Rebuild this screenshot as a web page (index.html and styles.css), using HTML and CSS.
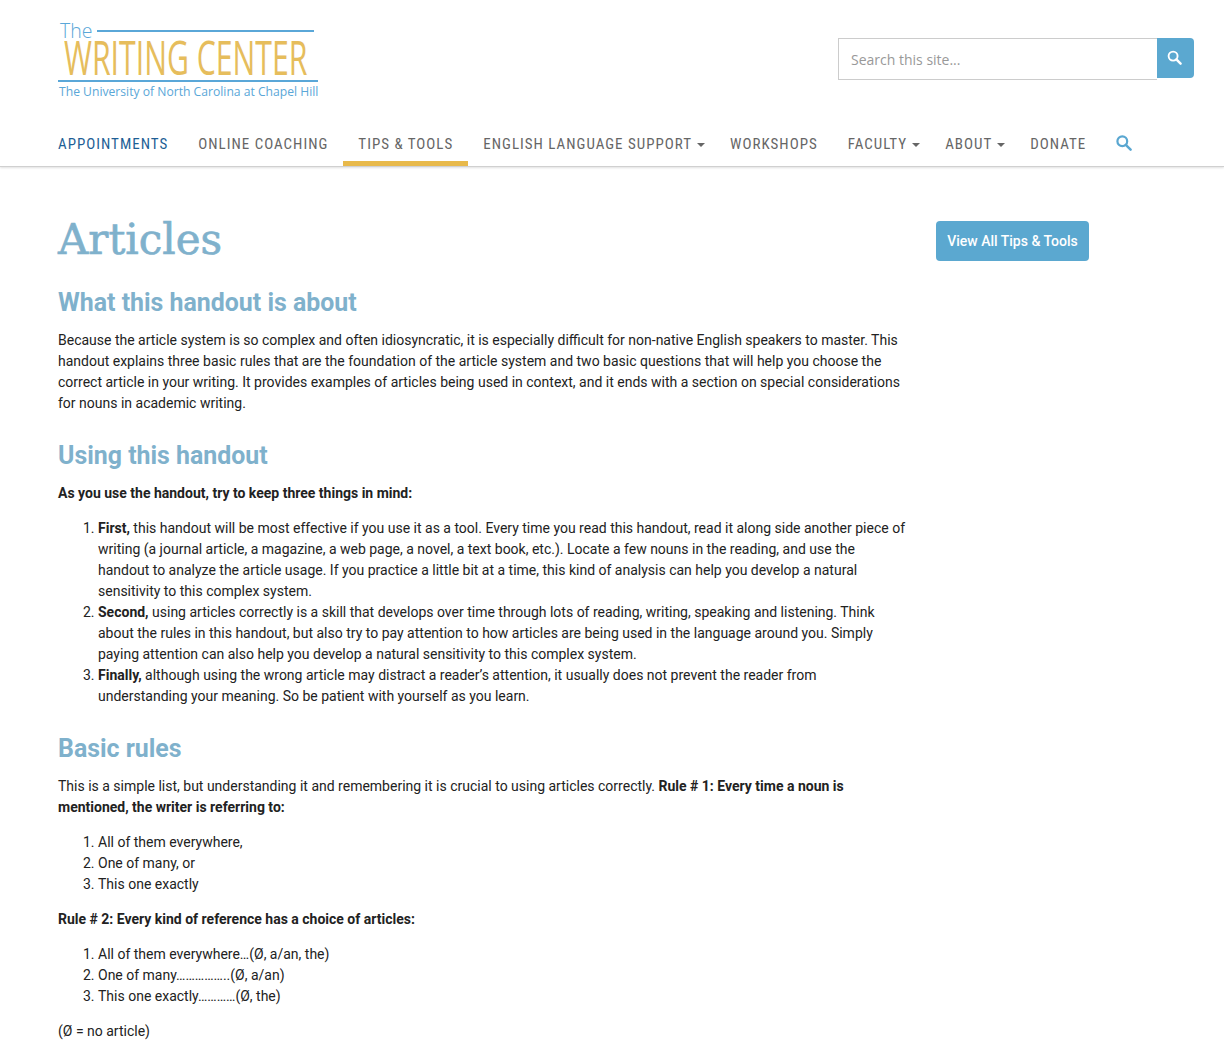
FILE: index.html
```html
<!DOCTYPE html>
<html lang="en">
<head>
<meta charset="utf-8">
<title>Articles – The Writing Center</title>
<link rel="stylesheet" href="styles.css">
</head>
<body>
<header class="site-header">
  <div class="top">
    <a class="logo" href="#">
      <div class="logo-the"><span>The</span><i></i></div>
      <div class="logo-name"><span>WRITING CENTER</span></div>
      <div class="logo-sub">The University of North Carolina at Chapel Hill</div>
    </a>
    <form class="search">
      <input class="search-input" type="text" placeholder="Search this site...">
      <button class="search-btn" type="button" aria-label="Search">
        <svg width="15" height="15" viewBox="0 0 16 16"><circle cx="6.5" cy="6.5" r="4.8" fill="none" stroke="#fff" stroke-width="2"/><path d="M10 10l4.5 4.5" stroke="#fff" stroke-width="2.6" stroke-linecap="round"/></svg>
      </button>
    </form>
  </div>
  <nav class="nav">
    <a class="nav-item first" href="#">Appointments</a>
    <a class="nav-item" href="#">Online Coaching</a>
    <a class="nav-item active" href="#">Tips &amp; Tools</a>
    <a class="nav-item drop" href="#">English Language Support<b class="caret"></b></a>
    <a class="nav-item" href="#">Workshops</a>
    <a class="nav-item drop" href="#">Faculty<b class="caret"></b></a>
    <a class="nav-item drop" href="#">About<b class="caret"></b></a>
    <a class="nav-item" href="#">Donate</a>
    <a class="nav-item nav-search" href="#" aria-label="Search">
      <svg width="16" height="16" viewBox="0 0 16 16"><circle cx="6.3" cy="6.3" r="4.9" fill="none" stroke="#5aa7d1" stroke-width="2.2"/><path d="M9.8 9.8l4.8 4.8" stroke="#5aa7d1" stroke-width="2.5" stroke-linecap="round"/></svg>
    </a>
  </nav>
</header>
<div class="page">
  <main class="content">
    <h1>Articles</h1>
    <h2 class="first-h2">What this handout is about</h2>
    <p>Because the article system is so complex and often idiosyncratic, it is especially difficult for non-native English speakers to master. This handout explains three basic rules that are the foundation of the article system and two basic questions that will help you choose the correct article in your writing. It provides examples of articles being used in context, and it ends with a section on special considerations for nouns in academic writing.</p>
    <h2>Using this handout</h2>
    <p><strong>As you use the handout, try to keep three things in mind:</strong></p>
    <ol>
      <li><strong>First,</strong> this handout will be most effective if you use it as a tool. Every time you read this handout, read it along side another piece of writing (a journal article, a magazine, a web page, a novel, a text book, etc.). Locate a few nouns in the reading, and use the handout to analyze the article usage. If you practice a little bit at a time, this kind of analysis can help you develop a natural sensitivity to this complex system.</li>
      <li><strong>Second,</strong> using articles correctly is a skill that develops over time through lots of reading, writing, speaking and listening. Think about the rules in this handout, but also try to pay attention to how articles are being used in the language around you. Simply paying attention can also help you develop a natural sensitivity to this complex system.</li>
      <li><strong>Finally,</strong> although using the wrong article may distract a reader’s attention, it usually does not prevent the reader from understanding your meaning. So be patient with yourself as you learn.</li>
    </ol>
    <h2>Basic rules</h2>
    <p>This is a simple list, but understanding it and remembering it is crucial to using articles correctly. <strong>Rule # 1: Every time a noun is mentioned, the writer is referring to:</strong></p>
    <ol>
      <li>All of them everywhere,</li>
      <li>One of many, or</li>
      <li>This one exactly</li>
    </ol>
    <p><strong>Rule # 2: Every kind of reference has a choice of articles:</strong></p>
    <ol>
      <li>All of them everywhere…(Ø, a/an, the)</li>
      <li>One of many……………..(Ø, a/an)</li>
      <li>This one exactly…………(Ø, the)</li>
    </ol>
    <p>(Ø = no article)</p>
  </main>
  <aside class="side">
    <a class="side-btn" href="#">View All Tips &amp; Tools</a>
  </aside>
</div>
</body>
</html>
```
FILE: styles.css
```css
* { box-sizing: border-box; }
html, body { margin: 0; padding: 0; }
body {
  background: #fff;
  color: #222;
  font-family: Roboto, "Liberation Sans", sans-serif;
  font-size: 14px;
  line-height: 21px;
  height: 1054px;
  overflow: hidden;
}
a { text-decoration: none; color: inherit; }

.site-header {
  height: 167px;
  border-bottom: 1px solid #d0d0d0;
  box-shadow: 0 1px 2px rgba(0,0,0,.12);
}
.top {
  height: 126px;
  padding: 20px 30px 0 58px;
  display: flex;
  justify-content: space-between;
  align-items: flex-start;
}
.logo { display: block; width: 262px; }
.logo-the {
  display: flex;
  align-items: center;
  gap: 5px;
  height: 21px;
  padding-left: 2px;
  padding-right: 6px;
  color: #5aa7d8;
  font-family: "Open Sans", sans-serif;
  font-weight: 300;
  font-size: 19.5px;
  line-height: 21px;
}
.logo-the i { flex: 1; height: 2px; background: #5aa7d8; margin-top: 1px; }
.logo-name {
  height: 39px;
  color: #e6bd5c;
  font-family: "Open Sans", sans-serif;
  font-weight: 500;
  font-size: 48px;
  line-height: 32px;
  white-space: nowrap;
  padding-left: 6px;
}
.logo-name span { display: inline-block; transform: scaleX(.63); transform-origin: 0 50%; }
.logo-sub {
  border-top: 2px solid #5aa7d8;
  width: 260px;
  padding-top: 2px;
  padding-left: 1px;
  color: #5aa7d8;
  font-family: "Open Sans", sans-serif;
  font-size: 12.15px;
  line-height: 16px;
  white-space: nowrap;
}

.search { display: flex; margin-top: 18px; }
.search-input {
  width: 319px;
  height: 42px;
  border: 1px solid #ccc;
  border-right: 0;
  padding: 0 12px;
  font-family: "Open Sans", sans-serif;
  font-size: 14px;
  color: #555;
  outline: 0;
  background: #fff;
}
.search-input::placeholder { color: #999; opacity: 1; }
.search-btn {
  width: 37px;
  height: 40px;
  border: 0;
  padding: 0 2px 2px 0;
  background: #5ba8d0;
  border-radius: 0 4px 4px 0;
  display: flex;
  align-items: center;
  justify-content: center;
}

.nav { height: 40px; display: flex; padding-left: 43px; }
.nav-item {
  height: 40px;
  padding: 8px 15px 0;
  font-family: "Roboto Condensed", Roboto, sans-serif;
  font-stretch: 75%;
  font-size: 15px;
  line-height: 21px;
  letter-spacing: 1px;
  text-transform: uppercase;
  font-weight: 450;
  color: #666;
  white-space: nowrap;
  border-bottom: 5px solid transparent;
}
.nav-item.first { color: #1e5f96; }
.nav-item.active { border-bottom-color: #e8b94a; }
.nav-item.drop { padding-right: 10px; }
.caret {
  display: inline-block;
  width: 0;
  height: 0;
  margin-left: 5px;
  vertical-align: 2px;
  border-top: 4px solid #666;
  border-left: 4px solid transparent;
  border-right: 4px solid transparent;
}
.nav-search { padding-top: 9px; }

.page { display: flex; padding-left: 58px; }
.content { width: 848px; }
.side { padding: 54px 0 0 30px; }
.side-btn {
  display: block;
  width: 153px;
  height: 40px;
  background: #5ba8d0;
  border-radius: 4px;
  color: #fff;
  font-size: 14px;
  font-weight: 500;
  line-height: 40px;
  text-align: center;
}

h1 {
  margin: 47px 0 0;
  font-family: "DejaVu Serif", serif;
  font-weight: 400;
  font-size: 42px;
  line-height: 52px;
  color: #7fb1cc;
  -webkit-text-stroke: .7px #7fb1cc;
}
h2 {
  margin: 27px 0 0;
  font-size: 24.9px;
  line-height: 30px;
  font-weight: 700;
  color: #7fb1cc;
}
h2.first-h2 { margin-top: 22px; }
p { margin: 12px 0 14px; }
ol { margin: 0 0 14px; padding-left: 40px; }
strong { font-weight: 700; color: #222; }
```
